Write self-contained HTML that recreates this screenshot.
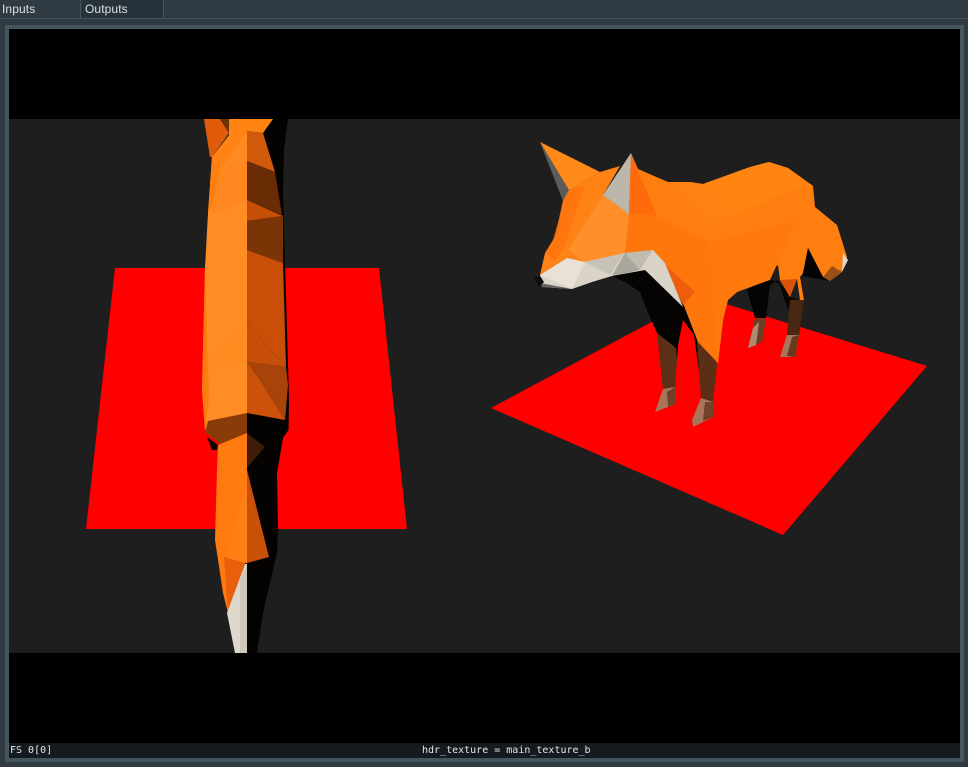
<!DOCTYPE html>
<html>
<head>
<meta charset="utf-8">
<style>
html,body{margin:0;padding:0;width:968px;height:767px;overflow:hidden;background:#2f3a42}
#tabs{position:absolute;left:0;top:0;width:968px;height:18px;background:#2f3a42;border-bottom:1px solid #44555d}
.tab{position:absolute;top:0;height:18px;font:12px/18px "Liberation Sans",sans-serif;color:#d8e0e4;letter-spacing:.1px}
#t2{left:80px;width:84px;box-sizing:border-box;padding-left:4px;background:#28323a;border-left:1px solid #44555d;border-right:1px solid #44555d}
#t1{left:2px;top:0}
#panel{position:absolute;left:5px;top:25px;width:951px;height:729px;border:4px solid #44555d;background:#000}
#sv{position:absolute;left:9px;top:29px}
#bar{position:absolute;left:9px;top:743px;width:951px;height:15px;background:#141a1e;font:10px/15px "DejaVu Sans Mono","Liberation Mono",monospace;color:#dfe8ee}
#bar span{position:absolute;top:0;white-space:pre}
</style>
</head>
<body>
<div id="tabs">
  <div class="tab" id="t1">Inputs</div>
  <div class="tab" id="t2">Outputs</div>
</div>
<div id="panel"></div>
<svg id="sv" width="951" height="714" viewBox="9 29 951 714" xmlns="http://www.w3.org/2000/svg">
  <rect x="9" y="29" width="951" height="714" fill="#000"/>
  <rect x="9" y="119" width="951" height="534" fill="#1e1e1e"/>
  <polygon points="115,268 379,268 407,529 86,529" fill="#f00"/>
  <polygon points="491,408 700,296 927,366 783,535" fill="#f00"/>

  <!-- left fox -->
  <g>
    <polygon points="247,119 288,119 284,150 283,190 289,400 288.500,430 283,438 277,473 278,530 277,553 263,613 257,653 246,653" fill="#040302"/>
    <polygon points="229,119 273,119 263,133 247,131 229,137" fill="#ff8512"/>
    <polygon points="204,119 220,119 229,133 212,157 210,157" fill="#e05c0a"/>
    <polygon points="220,119 229,119 229,133" fill="#6b3208"/>
    <polygon points="247,131 229,137 212,157 208,213 205,268 202,390 205,430 247,413" fill="#ff8c24"/>
    <polygon points="229,135 212,157 220,170 247,131" fill="#ff8214"/>
    <polygon points="212,157 220,170 213,205 208,213" fill="#ff8010"/>
    <polygon points="247,131 220,170 247,161" fill="#ff8a22"/>
    <polygon points="220,170 247,161 247,200 211,215" fill="#ff8720"/>
    <polygon points="205,268 202,390 205,430 209,400" fill="#ff7c10"/>
    <polygon points="247,323 209,362 247,362" fill="#ff8a20"/>
    <polygon points="247,131 263,133 275,172 247,161" fill="#d05a0c"/>
    <polygon points="247,161 275,172 282,215 247,200" fill="#692c05"/>
    <polygon points="247,200 283,216 247,221" fill="#c64f07"/>
    <polygon points="247,221 283,216 283,263 247,250" fill="#7b3406"/>
    <polygon points="247,250 283,263 286,367 247,323" fill="#c94f08"/>
    <polygon points="247,323 286,367 247,362" fill="#c64e08"/>
    <polygon points="247,362 260,380 285,420 247,413" fill="#cc520a"/>
    <polygon points="247,362 286,367 288,385 285,420 260,380" fill="#a8430a"/>
    <polygon points="247,413 208,421 205,432 220,444 247,433" fill="#8a3c08"/>
    <polygon points="207,437 218,445 217,450 212,450" fill="#0a0501"/>
    <polygon points="247,433 218,445 217,470 215,540 223,593 228,613 245,563 247,563" fill="#ff7a10"/>
    <polygon points="247,470 245,490 226,557 247,563" fill="#ff7f14"/>
    <polygon points="247,433 265,447 247,468" fill="#3d1c06"/>
    <polygon points="247,470 269,557 247,563" fill="#c95008"/>
    <polygon points="224,557 245,563 228,613" fill="#e9600c"/>
    <polygon points="245,564 247,564 247,653 235,653 227,613" fill="#ded7cc"/>
    <polygon points="240,580 247,564 247,653 240,653" fill="#cdc6ba"/>
  </g>

  <!-- right fox: hind legs -->
  <polygon points="747,290 768,277 788,290 792,303 788,310 778,280 770,285 766,318 755,318" fill="#060403"/>
  <polygon points="755,319 766,318 762,342 748,348" fill="#6a3e26"/>
  <polygon points="753,328 759,322 756,345 748,348" fill="#b08a70"/>
  <polygon points="778,282 790,297 800,300 804,300 799,335 787,335 790,310" fill="#0b0603"/>
  <polygon points="790,300 804,300 799,335 787,335" fill="#4a2712"/>
  <polygon points="787,335 799,335 795,357 780,357" fill="#a8755a"/>
  <polygon points="792,337 799,335 795,357 787,356" fill="#6a3a20"/>

  <!-- chest black and front legs -->
  <polygon points="612,276 645,270 690,310 698,342 699,372 694,335 683,320 678,345 677,360 657,333 647,310 640,292 625,282" fill="#050403"/>
  <polygon points="657,333 676,348 677,360 675,387 663,390" fill="#5b3017"/>
  <polygon points="663,389 675,387 676,404 655,412" fill="#a8755a"/>
  <polygon points="667,392 675,387 676,404 668,407" fill="#6e4029"/>
  <polygon points="697,342 712,347 717,365 713,402 701,398" fill="#5a2f16"/>
  <polygon points="701,398 713,402 713,417 693,427 692,420" fill="#a8755a"/>
  <polygon points="705,402 713,402 713,417 703,421" fill="#70422a"/>

  <!-- right fox: body -->
  <polygon points="631,153 638,169 668,182 690,182 703,184 750,167 769,162 788,168 813,186 815,207 837,225 847,257 842,272 830,281 823,277 808,248 803,273 800,277 804,300 800,300 797,279 790,297 780,280 778,265 737,292 728,300 723,320 718,363 698,342 683,303 665,263 653,250 625,253 629,214" fill="#ff7e10"/>
  <polygon points="703,184 750,167 769,162 788,168 813,186 790,190 736,214 716,192" fill="#ff8412"/>
  <polygon points="668,182 690,182 703,184 716,192 736,214 710,225 690,205" fill="#ff8114"/>
  <polygon points="629,214 657,216 710,242 725,300 718,363 698,342 683,303 665,263 653,250 625,253" fill="#ff760c"/>
  <polygon points="710,242 797,220 770,280 737,292 728,300 723,320 718,363" fill="#ff7a0e"/>
  <polygon points="631,153 629,214 657,216" fill="#ff6a0c"/>
  <polygon points="660,260 695,292 683,305" fill="#ee5c0c"/>
  <polygon points="780,280 797,279 790,297" fill="#d9520c"/>
  <polygon points="808,248 823,277 830,281 803,276 803,273" fill="#050303"/>
  <polygon points="823,277 832,266 842,272 830,281" fill="#9a4f14"/>
  <polygon points="843,253 848,260 842,272" fill="#ddd6cc"/>

  <!-- right fox: ear and head -->
  <polygon points="540,142 569,190 563,201" fill="#5c5c58"/>
  <polygon points="540,142 600,172 569,190" fill="#ff8a1a"/>
  <polygon points="569,190 600,172 620,166 603,195 629,214 625,253 585,262 567,258 540,275 545,253 555,237 563,201" fill="#ff8214"/>
  <polygon points="563,201 569,190 585,185 565,245 555,260 545,253 555,237" fill="#ff7610"/>
  <polygon points="563,205 556,235 553,240" fill="#e0660c"/>
  <polygon points="603,195 629,214 625,253 585,262 568,250" fill="#ff8f2a"/>
  <polygon points="631,153 603,195 629,214" fill="#bdb6aa"/>

  <!-- muzzle -->
  <polygon points="540,275 567,258 585,262 625,253 653,250 665,263 683,307 645,270 612,276 592,282 572,289 542,287" fill="#d9d3c8"/>
  <polygon points="540,275 567,258 585,262 572,289" fill="#e8e2d6"/>
  <polygon points="585,262 625,253 610,275" fill="#c6c2b7"/>
  <polygon points="625,253 640,270 612,276" fill="#a9a69c"/>
  <polygon points="625,253 653,250 640,270" fill="#c0bbb0"/>
  <polygon points="540,283 572,289 542,287" fill="#65635e"/>
  <polygon points="534,278 540,276 544,282 539,287" fill="#0d0d0d"/>
</svg>
<div id="bar"><span style="left:1px">FS 0[0]</span><span style="left:413px">hdr_texture = main_texture_b</span></div>
</body>
</html>
